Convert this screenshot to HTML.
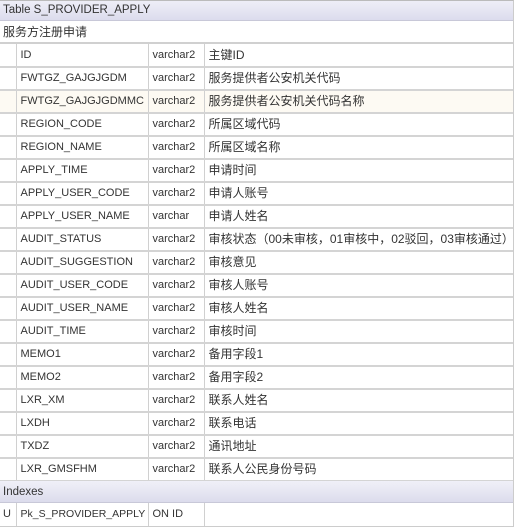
<!DOCTYPE html><html><head><meta charset="utf-8"><style>
*{margin:0;padding:0;box-sizing:border-box}
body{width:515px;height:530px;background:#fff;font-family:"Liberation Sans","Noto Sans CJK SC",sans-serif;font-size:12px;color:#333;position:relative;overflow:hidden}
.wrap{position:absolute;left:0;top:0;width:514px;height:527px;border-right:1px solid #ccc;border-bottom:1px solid #ccc;border-top:1px solid #bbb}
.hd{height:20px;background:linear-gradient(#eeeef7,#dcdced);border-bottom:1px solid #c8c8d8;padding-left:3px;line-height:19px;color:#333;font-size:11.5px}
.sub{height:23px;line-height:22px;padding-left:3px;border-bottom:2px solid #d0d0d0}
table{border-collapse:collapse;width:513px;table-layout:fixed}
td{height:23px;border-bottom:2px solid #d4d4d4;border-right:1px solid #d0d0d0;padding-left:4px;white-space:nowrap;overflow:hidden;line-height:21px;font-size:11px}
td:last-child{border-right:none;font-size:12px}
tr.alt td{background:#fdfaf3}
.ix{height:22px;background:linear-gradient(#f0f0f8,#dcdcec);border-bottom:1px solid #c8c8d8;padding-left:3px;line-height:22px;margin-top:-1px;font-size:11.5px}
</style></head><body><div class="wrap">
<div class="hd">Table S_PROVIDER_APPLY</div>
<div class="sub">服务方注册申请</div>
<table><colgroup><col style="width:16px"><col style="width:132px"><col style="width:56px"><col></colgroup>
<tr><td></td><td>ID</td><td>varchar2</td><td>主键ID</td></tr>
<tr><td></td><td>FWTGZ_GAJGJGDM</td><td>varchar2</td><td>服务提供者公安机关代码</td></tr>
<tr class="alt"><td></td><td>FWTGZ_GAJGJGDMMC</td><td>varchar2</td><td>服务提供者公安机关代码名称</td></tr>
<tr><td></td><td>REGION_CODE</td><td>varchar2</td><td>所属区域代码</td></tr>
<tr><td></td><td>REGION_NAME</td><td>varchar2</td><td>所属区域名称</td></tr>
<tr><td></td><td>APPLY_TIME</td><td>varchar2</td><td>申请时间</td></tr>
<tr><td></td><td>APPLY_USER_CODE</td><td>varchar2</td><td>申请人账号</td></tr>
<tr><td></td><td>APPLY_USER_NAME</td><td>varchar</td><td>申请人姓名</td></tr>
<tr><td></td><td>AUDIT_STATUS</td><td>varchar2</td><td>审核状态（00未审核，01审核中，02驳回，03审核通过）</td></tr>
<tr><td></td><td>AUDIT_SUGGESTION</td><td>varchar2</td><td>审核意见</td></tr>
<tr><td></td><td>AUDIT_USER_CODE</td><td>varchar2</td><td>审核人账号</td></tr>
<tr><td></td><td>AUDIT_USER_NAME</td><td>varchar2</td><td>审核人姓名</td></tr>
<tr><td></td><td>AUDIT_TIME</td><td>varchar2</td><td>审核时间</td></tr>
<tr><td></td><td>MEMO1</td><td>varchar2</td><td>备用字段1</td></tr>
<tr><td></td><td>MEMO2</td><td>varchar2</td><td>备用字段2</td></tr>
<tr><td></td><td>LXR_XM</td><td>varchar2</td><td>联系人姓名</td></tr>
<tr><td></td><td>LXDH</td><td>varchar2</td><td>联系电话</td></tr>
<tr><td></td><td>TXDZ</td><td>varchar2</td><td>通讯地址</td></tr>
<tr><td></td><td>LXR_GMSFHM</td><td>varchar2</td><td>联系人公民身份号码</td></tr>
</table>
<div class="ix">Indexes</div>
<table><colgroup><col style="width:16px"><col style="width:132px"><col style="width:56px"><col></colgroup>
<tr><td style="padding-left:3px;border-bottom:none">U</td><td style="border-bottom:none;font-size:10.5px">Pk_S_PROVIDER_APPLY</td><td style="border-bottom:none">ON ID</td><td style="border-bottom:none"></td></tr>
</table>
</div></body></html>
